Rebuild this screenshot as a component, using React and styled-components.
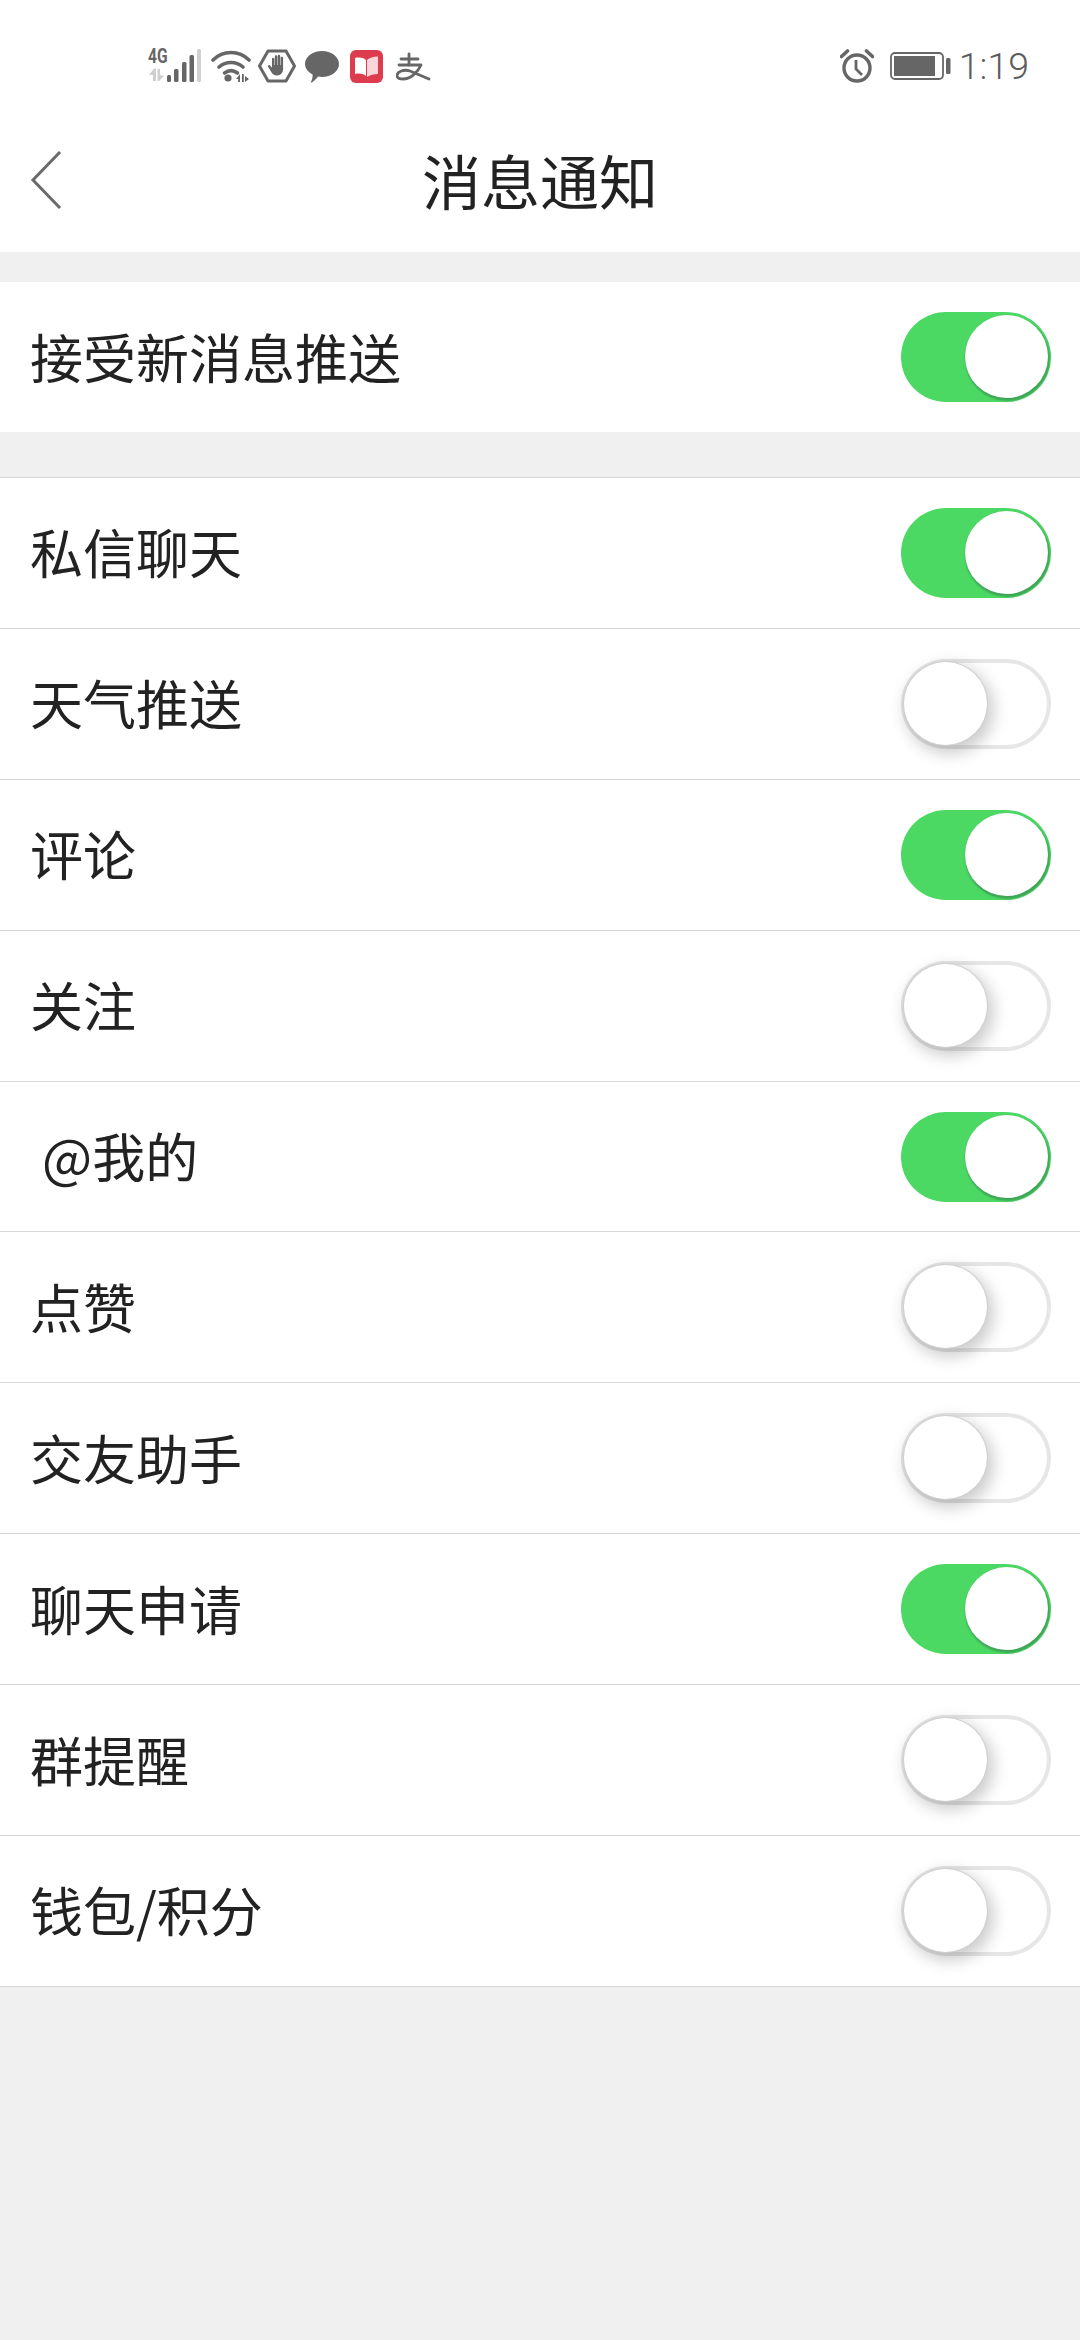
// Message notification settings screen.
import React from 'react';
import styled, { createGlobalStyle } from 'styled-components';

const GlobalStyle = createGlobalStyle`
  html, body {
    margin: 0;
    padding: 0;
    background: #f0f0f0;
  }
  body {
    font-family: "Noto Sans CJK SC", "Noto Sans", sans-serif;
  }
  * {
    box-sizing: border-box;
  }
`;

const Page = styled.div`
  width: 1080px;
  min-height: 2340px;
  background: #f0f0f0;
`;

const Top = styled.div`
  background: #fff;
  height: 252px;
`;

const StatusBar = styled.div`
  height: 132px;
  display: flex;
  align-items: center;
  justify-content: space-between;
  padding: 0 51px 0 147px;
`;

const StatusGroup = styled.div`
  display: flex;
  align-items: center;
`;

// keeps the uneven spacing between the status icons
const Slot = styled.div`
  display: flex;
  margin-left: ${(p) => p.$left || 0}px;
`;

const SignalWrap = styled.div`
  position: relative;
  width: 54px;
  height: 36px;
`;

const NetworkLabel = styled.span`
  position: absolute;
  left: 1px;
  top: -2px;
  font-family: "Roboto", sans-serif;
  font-size: 20px;
  line-height: 20px;
  font-weight: 700;
  color: #666;
  transform: scaleX(0.78);
  transform-origin: left top;
`;

const Time = styled.span`
  font-family: "Roboto", sans-serif;
  font-size: 37.5px;
  line-height: 40px;
  font-weight: 300;
  color: #5c5c5c;
  margin-left: 8px;
`;

const NavBar = styled.div`
  height: 120px;
  position: relative;
  display: flex;
  align-items: center;
  justify-content: center;
  padding-bottom: 24px;
`;

const BackIcon = styled.svg`
  position: absolute;
  left: 30px;
  top: 18px;
`;

const Title = styled.h1`
  margin: 0;
  font-size: 59px;
  line-height: 80px;
  font-weight: 400;
  color: #222;
`;

const Group = styled.div`
  background: #fff;
  margin-top: ${(p) => p.$top}px;
  border-top: ${(p) => (p.$ruled ? '1.5px solid #d8d8d8' : 'none')};
`;

const Row = styled.div`
  height: ${(p) => p.$height}px;
  display: flex;
  align-items: center;
  justify-content: space-between;
  padding: 0 29px 0 30px;
  border-bottom: ${(p) => (p.$ruled ? '1.5px solid #d8d8d8' : 'none')};
`;

const Label = styled.span`
  font-size: 53px;
  line-height: 70px;
  color: #222;
  white-space: pre;
  padding-left: ${(p) => (p.$indent ? 12 : 0)}px;
  padding-bottom: 3px;
`;

const Track = styled.div`
  width: 150px;
  height: 90px;
  border-radius: 45px;
  display: flex;
  padding: 3px;
  justify-content: ${(p) => (p.$on ? 'flex-end' : 'flex-start')};
  background: ${(p) => (p.$on ? '#4bd964' : '#fff')};
  box-shadow: ${(p) => (p.$on ? 'none' : 'inset 0 0 0 4px #e6e6e6')};
`;

const Knob = styled.div`
  width: 83px;
  height: 83px;
  border-radius: 50%;
  background: #fff;
  box-shadow: ${(p) =>
    p.$on
      ? '1px 2px 2px 1px #3fa556'
      : '0 0 1px 1px #cfcfcf, 4px 6px 16px 3px rgba(0, 0, 0, 0.2)'};
`;

function SignalIcon() {
  return (
    <SignalWrap>
      <NetworkLabel>4G</NetworkLabel>
      <svg width="54" height="36" viewBox="0 0 54 36" style={{ display: 'block' }}>
        <g fill="#cfcfcf">
          <path d="M2 27l5-6.500h2V33H6v-6z" />
          <path d="M10.500 21H13v6l4 1-5 5h-1.500z" />
        </g>
        <g fill="#666">
          <rect x="20" y="27" width="4" height="7" rx="1.500" />
          <rect x="27" y="21" width="4.500" height="13" rx="1.500" />
          <rect x="35" y="14" width="4.500" height="20" rx="1.500" />
          <rect x="42.500" y="7" width="4.500" height="27" rx="1.500" />
        </g>
        <rect x="50" y="1" width="4" height="33" rx="1.500" fill="#d0d0d0" />
      </svg>
    </SignalWrap>
  );
}

function WifiIcon() {
  return (
    <svg width="40" height="34" viewBox="0 0 40 34">
      <g fill="none" stroke="#666" strokeWidth="3.600" strokeLinecap="round">
        <path d="M2 11c10-10 26-10 36 0" />
        <path d="M8 18c7-6 17-6 24 0" />
        <path d="M13.500 24c4-3 9-3 13 0" />
      </g>
      <circle cx="17" cy="29" r="3.600" fill="#666" />
      <path d="M25 30l4-5v8h-1.800v-3zM31 25h1.800v8H31zM34 27l4 3-4 3z" fill="#666" />
    </svg>
  );
}

function HandIcon() {
  return (
    <svg width="38" height="34" viewBox="0 0 38 34">
      <path d="M10 2h18l8.500 15L28 32H10L1.500 17z" fill="none" stroke="#666" strokeWidth="3" strokeLinejoin="round" />
      <path
        d="M14 10c0-1.600 2.400-1.600 2.400 0v6h.5V7.500c0-1.600 2.400-1.600 2.400 0V16h.5V7c0-1.600 2.400-1.600 2.400 0v9h.5V9c0-1.600 2.400-1.600 2.400 0v11c0 3.500-2 6.500-6.300 6.500-2.700 0-4.200-1.200-5.400-3.200l-3.300-5.500c-.8-1.400 1-2.400 2-1.300l1.900 2.200z"
        fill="#666"
      />
    </svg>
  );
}

function BubbleIcon() {
  return (
    <svg width="34" height="33" viewBox="0 0 34 33">
      <path
        d="M17 1c9.400 0 17 5.700 17 13s-7.600 13-17 13c-1.500 0-2.500-.1-3.800-.4C11 29.500 8 32 6.500 32.400c-.8.200-.8-.4-.4-1 1-1.500 1.600-4 1.500-7C3 22 0 18.300 0 14 0 6.700 7.600 1 17 1z"
        fill="#666"
      />
    </svg>
  );
}

function BookIcon() {
  return (
    <svg width="33" height="33" viewBox="0 0 33 33">
      <rect width="33" height="33" rx="6" fill="#dc3c4e" />
      <path d="M5 8c4-1 8-.5 11 2v16c-3-2.500-7-3-11-2z" fill="#fff" />
      <path d="M17 10c2.500-2 6-3.500 11-3.500V24c-4 0-8 1-11 3z" fill="#fbd5da" />
    </svg>
  );
}

function AlipayIcon() {
  return (
    <svg width="36" height="33" viewBox="0 0 36 33">
      <g fill="none" stroke="#666" strokeWidth="2.800" strokeLinecap="round" strokeLinejoin="round">
        <path d="M5 9h17" />
        <path d="M13 4v11" />
        <path d="M3 15h22c-3 7-10 14-18 14-4 0-6-1.500-6-3.500 0-4 7-6.500 13-4.500l19 8" />
      </g>
    </svg>
  );
}

function AlarmIcon() {
  return (
    <svg width="34" height="34" viewBox="0 0 34 34" style={{ display: 'block' }}>
      <circle cx="17" cy="19" r="13" fill="none" stroke="#666" strokeWidth="3.400" />
      <path d="M16 11v9l6 6" fill="none" stroke="#666" strokeWidth="2.800" />
      <path d="M1.500 7.500L7.500 2M32.500 7.500L26.500 2" stroke="#666" strokeWidth="3.600" strokeLinecap="round" />
    </svg>
  );
}

function BatteryIcon() {
  return (
    <svg width="61" height="28" viewBox="0 0 61 28" style={{ display: 'block' }}>
      <rect x="1" y="1" width="52" height="26" rx="4" fill="none" stroke="#666" strokeWidth="1.800" />
      <rect x="4" y="4" width="41" height="20" fill="#666" />
      <rect x="56" y="6" width="4.500" height="16" rx="1.500" fill="#666" />
    </svg>
  );
}

const SETTINGS = [
  { label: '私信聊天', on: true },
  { label: '天气推送', on: false },
  { label: '评论', on: true },
  { label: '关注', on: false },
  { label: '@我的', on: true, indent: true },
  { label: '点赞', on: false },
  { label: '交友助手', on: false },
  { label: '聊天申请', on: true },
  { label: '群提醒', on: false },
  { label: '钱包/积分', on: false },
];

function Toggle({ on }) {
  return (
    <Track $on={on}>
      <Knob $on={on} />
    </Track>
  );
}

export default function App() {
  return (
    <Page>
      <GlobalStyle />
      <Top>
        <StatusBar>
          <StatusGroup>
            <SignalIcon />
            <Slot $left={10}><WifiIcon /></Slot>
            <Slot $left={7}><HandIcon /></Slot>
            <Slot $left={9}><BubbleIcon /></Slot>
            <Slot $left={11}><BookIcon /></Slot>
            <Slot $left={13}><AlipayIcon /></Slot>
          </StatusGroup>
          <StatusGroup>
            <AlarmIcon />
            <Slot $left={16}><BatteryIcon /></Slot>
            <Time>1:19</Time>
          </StatusGroup>
        </StatusBar>
        <NavBar>
          <BackIcon width="32" height="60" viewBox="0 0 32 60">
            <path d="M30 2L3 30l27 28" fill="none" stroke="#6a6a6a" strokeWidth="3" />
          </BackIcon>
          <Title>消息通知</Title>
        </NavBar>
      </Top>
      <Group $top={30}>
        <Row $height={150}>
          <Label>接受新消息推送</Label>
          <Toggle on />
        </Row>
      </Group>
      <Group $top={45} $ruled>
        {SETTINGS.map((item) => (
          <Row key={item.label} $height={150.9} $ruled>
            <Label $indent={item.indent}>{item.label}</Label>
            <Toggle on={item.on} />
          </Row>
        ))}
      </Group>
    </Page>
  );
}
